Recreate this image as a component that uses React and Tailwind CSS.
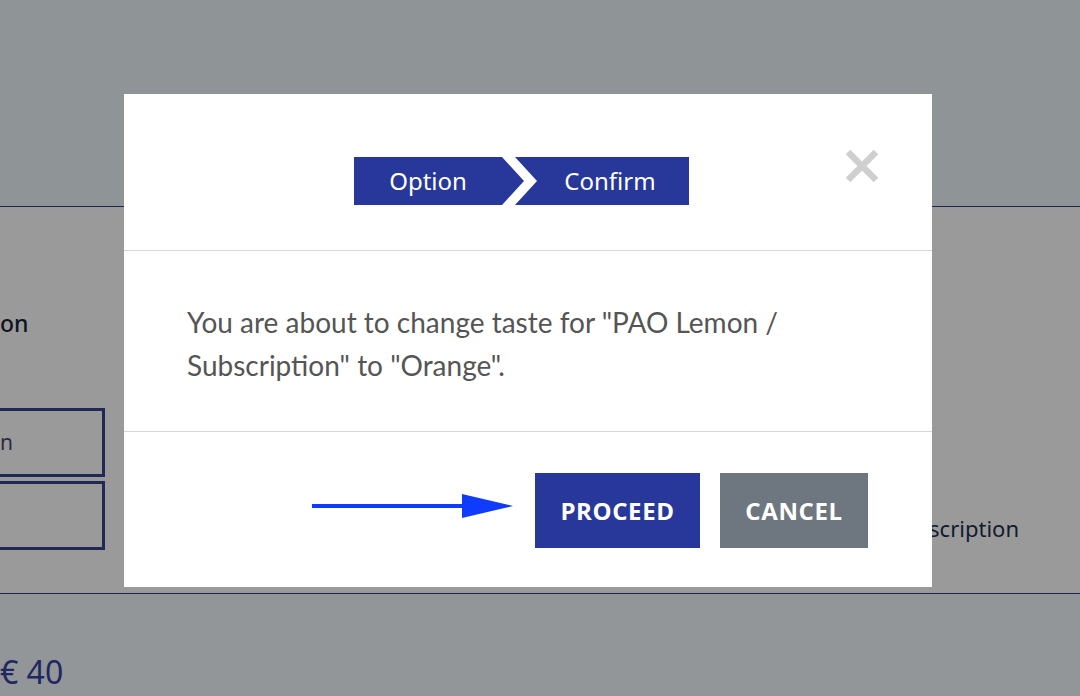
import React from 'react';

// Background page (dimmed by overlay) + confirm modal
const CloseIcon = () => (
  <svg width="34" height="34" viewBox="0 0 34 34" aria-hidden="true">
    <path d="M3 3 L31 31 M31 3 L3 31" stroke="#cfcfcf" strokeWidth="6.5" strokeLinecap="butt" />
  </svg>
);

const PointerArrow = () => (
  <svg className="mb-[10px]" width="201" height="26" viewBox="0 0 201 26" aria-hidden="true">
    <rect x="0" y="11" width="157" height="4" fill="#0f3bff" />
    <polygon points="150,1 201,13 150,25" fill="#0f3bff" />
  </svg>
);

const ConfirmModal = () => (
  <div className="absolute left-[124px] top-[94px] w-[808px] bg-white">
    {/* header / stepper */}
    <div className="relative h-[157px] border-b border-[#d6d6d6] pl-[230px] pt-[63px]">
      <div className="flex" style={{ fontFamily: '"Noto Sans", sans-serif' }}>
        <div className="flex h-[48px] w-[170px] items-center justify-center bg-[#27389a] pr-[22px] text-[24px] text-white [clip-path:polygon(0_0,148px_0,100%_50%,148px_100%,0_100%)]">
          Option
        </div>
        <div className="-ml-[9px] flex h-[48px] w-[174px] items-center justify-center bg-[#27389a] pl-[16px] text-[24px] text-white [clip-path:polygon(0_0,100%_0,100%_100%,0_100%,22px_50%)]">
          Confirm
        </div>
      </div>
      <button className="absolute right-[53px] top-[55px]">
        <CloseIcon />
      </button>
    </div>

    {/* body */}
    <div className="border-b border-[#d6d6d6] px-[63px] pb-[44px] pt-[50px]">
      <p
        className="text-[28px] leading-[43px] text-[#555555]"
        style={{ fontFamily: 'Lato, sans-serif' }}
      >
        You are about to change taste for "PAO Lemon /
        <br />
        Subscription" to "Orange".
      </p>
    </div>

    {/* footer */}
    <div className="flex h-[155px] items-center justify-end pr-[64px] pt-[2px]">
      <PointerArrow />
      <button
        className="ml-[22px] h-[75px] w-[165px] bg-[#27389a] text-[24px] font-bold tracking-[0.6px] text-white"
        style={{ fontFamily: '"Open Sans", sans-serif' }}
      >
        PROCEED
      </button>
      <button
        className="ml-[20px] h-[75px] w-[148px] bg-[#6e7780] text-[24px] font-bold tracking-[0.6px] text-white"
        style={{ fontFamily: '"Open Sans", sans-serif' }}
      >
        CANCEL
      </button>
    </div>
  </div>
);

export default function App() {
  return (
    <div
      className="relative flex h-[696px] w-full flex-col overflow-hidden bg-[#939698]"
      style={{ fontFamily: '"Noto Sans", sans-serif' }}
    >
      {/* header band */}
      <div className="h-[207px] shrink-0 border-b border-[#1d2450] bg-[#8f9497]" />

      {/* product section */}
      <div className="flex h-[387px] shrink-0 border-b border-[#1d2450] bg-[#9a9a9a]">
        <div className="w-[105px] shrink-0 pt-[99px]">
          <h3 className="text-[23px] font-medium leading-[34px] text-[#0f1222]">on</h3>
          <div className="-ml-[10px] mt-[68px] flex h-[69px] items-center border-[3px] border-l-0 border-[#1f2857] pl-[10px] text-[21px] text-[#2a2d40]">
            n
          </div>
          <div className="-ml-[10px] mt-[4px] h-[69px] border-[3px] border-l-0 border-[#1f2857]" />
        </div>
        <div className="flex flex-1 justify-end pr-[61px] pt-[304px]">
          <span className="text-[22px] leading-[34px] text-[#121a2e]">Subscription</span>
        </div>
      </div>

      {/* price */}
      <div className="pt-[58px]">
        <span className="text-[32px] leading-[40px] text-[#1f2862]">€ 40</span>
      </div>

      <ConfirmModal />
    </div>
  );
}
